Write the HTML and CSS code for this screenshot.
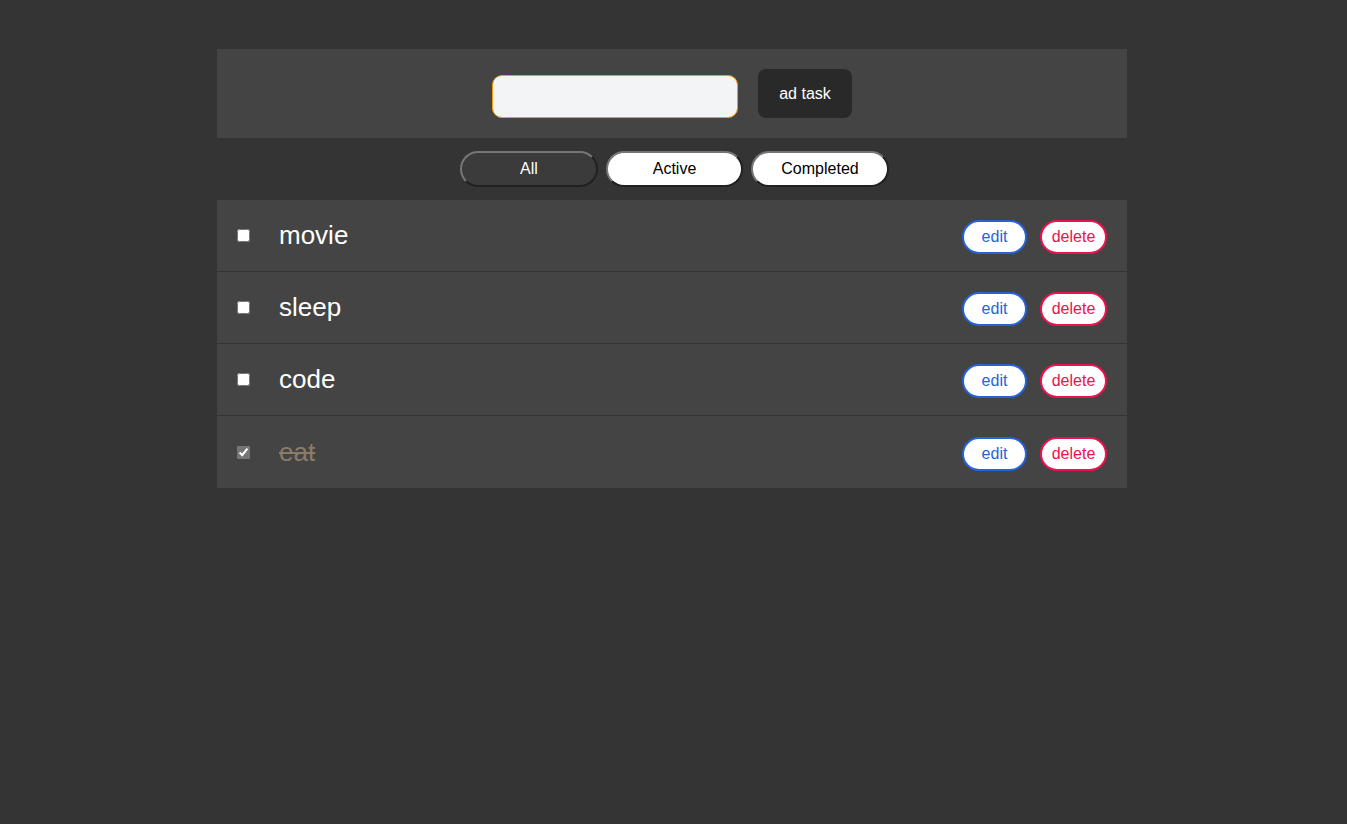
FILE: index.html
```html
<!DOCTYPE html>
<html lang="en">
<head>
<meta charset="utf-8">
<title>Todo</title>
<link rel="stylesheet" href="styles.css">
</head>
<body>
<main class="app">
  <form class="add-bar">
    <input class="add-input" type="text">
    <button class="add-btn" type="button">ad task</button>
  </form>
  <div class="filters">
    <button class="filter filter-all" type="button">All</button>
    <button class="filter filter-active" type="button">Active</button>
    <button class="filter filter-completed" type="button">Completed</button>
  </div>
  <ul class="list">
    <li class="item">
      <input class="check" type="checkbox">
      <span class="label">movie</span>
      <div class="actions">
        <button class="btn edit" type="button">edit</button>
        <button class="btn delete" type="button">delete</button>
      </div>
    </li>
    <li class="item">
      <input class="check" type="checkbox">
      <span class="label">sleep</span>
      <div class="actions">
        <button class="btn edit" type="button">edit</button>
        <button class="btn delete" type="button">delete</button>
      </div>
    </li>
    <li class="item">
      <input class="check" type="checkbox">
      <span class="label">code</span>
      <div class="actions">
        <button class="btn edit" type="button">edit</button>
        <button class="btn delete" type="button">delete</button>
      </div>
    </li>
    <li class="item done">
      <input class="check" type="checkbox" checked>
      <span class="label">eat</span>
      <div class="actions">
        <button class="btn edit" type="button">edit</button>
        <button class="btn delete" type="button">delete</button>
      </div>
    </li>
  </ul>
</main>
</body>
</html>
```

FILE: styles.css
```css
* { box-sizing: border-box; }

html, body {
  margin: 0;
  background: #343434;
  font-family: "Liberation Sans", Arial, sans-serif;
}

body {
  padding: 0 3px 0 0;
}

.app {
  width: 910px;
  margin: 49px auto 0;
}

.add-bar {
  display: flex;
  justify-content: center;
  align-items: flex-end;
  gap: 20px;
  padding: 20px;
  margin: 0;
  background: #444444;
}

.add-input {
  width: 246px;
  height: 43px;
  border: 1px solid #f59e0b;
  border-radius: 10px;
  background: #f3f4f6;
  outline: none;
  font-size: 16px;
  padding: 0 10px;
}

.add-btn {
  width: 94px;
  height: 49px;
  border: none;
  border-radius: 8px;
  background: #292929;
  color: #ffffff;
  font-family: inherit;
  font-size: 16px;
}

.filters {
  display: flex;
  justify-content: center;
  gap: 8px;
  padding: 13px 0 13px 5px;
}

.filter {
  height: 36px;
  border: 2px outset #767676;
  border-radius: 18px;
  background: #ffffff;
  color: #000000;
  font-family: inherit;
  font-size: 16px;
  padding: 0;
}

.filter-all {
  width: 138px;
  background: #3b3b3b;
  color: #ffffff;
}

.filter-active { width: 137px; }
.filter-completed { width: 138px; }

.list {
  list-style: none;
  margin: 0;
  padding: 0;
}

.item {
  display: flex;
  align-items: center;
  height: 72px;
  padding: 0 20px;
  background: #444444;
  border-bottom: 1px solid #343434;
}

.item:last-child {
  border-bottom: none;
}

.check {
  width: 13px;
  height: 13px;
  margin: 0;
  accent-color: #757575;
}

.label {
  margin-left: 29px;
  font-size: 26px;
  color: #ffffff;
}

.done .label {
  color: #8a7c68;
  text-decoration: line-through;
}

.actions {
  margin-left: auto;
  display: flex;
  gap: 13px;
  margin-top: 3px;
}

.btn {
  height: 34px;
  padding: 0;
  border-radius: 17px;
  background: #ffffff;
  font-family: inherit;
  font-size: 16px;
}

.edit {
  width: 65px;
  border: 2px solid #2563d8;
  color: #2563d8;
}

.delete {
  width: 67px;
  border: 2px solid #f0104f;
  color: #f0104f;
}
```
